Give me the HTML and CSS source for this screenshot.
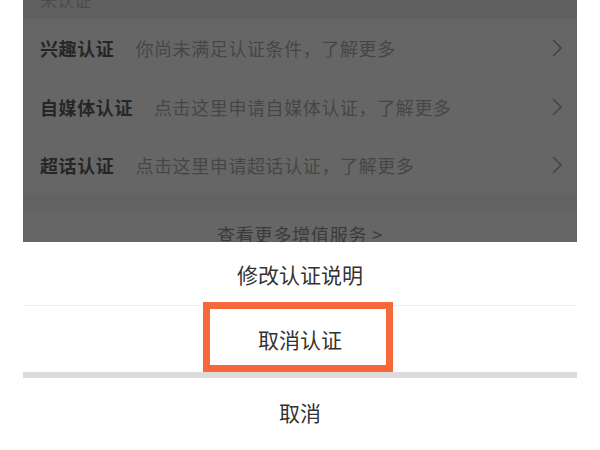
FILE: index.html
```html
<!DOCTYPE html>
<html lang="zh">
<head>
<meta charset="utf-8">
<link rel="stylesheet" href="styles.css">
</head>
<body>
<div class="screen">
  <div class="dim">
    <div class="section-head"><span>未认证</span></div>
    <div class="row">
      <span class="title">兴趣认证</span>
      <span class="desc">你尚未满足认证条件，了解更多</span>
      <svg class="chev" width="10" height="18" viewBox="0 0 10 18"><polyline points="1,1 9,9 1,17" fill="none" stroke="#454545" stroke-width="1.6"/></svg>
    </div>
    <div class="row">
      <span class="title">自媒体认证</span>
      <span class="desc">点击这里申请自媒体认证，了解更多</span>
      <svg class="chev" width="10" height="18" viewBox="0 0 10 18"><polyline points="1,1 9,9 1,17" fill="none" stroke="#454545" stroke-width="1.6"/></svg>
    </div>
    <div class="row">
      <span class="title">超话认证</span>
      <span class="desc">点击这里申请超话认证，了解更多</span>
      <svg class="chev" width="10" height="18" viewBox="0 0 10 18"><polyline points="1,1 9,9 1,17" fill="none" stroke="#454545" stroke-width="1.6"/></svg>
    </div>
    <div class="band"></div>
    <div class="more">查看更多增值服务 &gt;</div>
  </div>
  <div class="sheet">
    <div class="item">修改认证说明</div>
    <div class="item item-hl">取消认证<span class="mark"></span></div>
    <div class="divider"></div>
    <div class="item item-cancel">取消</div>
  </div>
</div>
</body>
</html>
```
FILE: styles.css
```css
html, body {
  margin: 0;
  padding: 0;
  background: #ffffff;
}
body {
  font-family: "Noto Sans CJK SC", "Noto Sans", sans-serif;
  width: 600px;
  height: 450px;
  overflow: hidden;
}
.screen {
  margin: 0 23px;
  width: 554px;
}
.dim {
  background: #666666;
  height: 242px;
  overflow: hidden;
}
.section-head {
  height: 19px;
  background: #5f5f5f;
  padding-left: 17px;
  overflow: hidden;
}
.section-head span {
  display: block;
  margin-top: -12px;
  font-size: 17px;
  line-height: 24px;
  color: #4d4d4d;
}
.row {
  display: flex;
  align-items: center;
  height: 58.5px;
  padding: 0 15px 0 17px;
  font-size: 18px;
  letter-spacing: 0.6px;
}
.title {
  font-weight: bold;
  color: #262626;
}
.desc {
  margin-left: 21px;
  color: #464646;
  flex: 1;
}
.chev {
  display: block;
  flex: none;
}
.band {
  height: 17px;
  background: #626262;
}
.more {
  text-align: center;
  font-size: 18px;
  line-height: 24px;
  padding-top: 10px;
  color: #3a3a3a;
  letter-spacing: 0.8px;
}
.sheet {
  background: #ffffff;
}
.item {
  display: flex;
  align-items: center;
  justify-content: center;
  height: 63px;
  font-size: 21px;
  color: #333333;
  border-bottom: 1px solid #eeeeee;
  position: relative;
}
.item-hl {
  height: 66px;
  border-bottom: none;
}
.mark {
  position: absolute;
  left: 180px;
  top: -4px;
  width: 176px;
  height: 56px;
  border: 7px solid #f4683a;
}
.divider {
  height: 6px;
  background: #dcdcdc;
}
.item-cancel {
  height: 68px;
  border-bottom: none;
}
```
